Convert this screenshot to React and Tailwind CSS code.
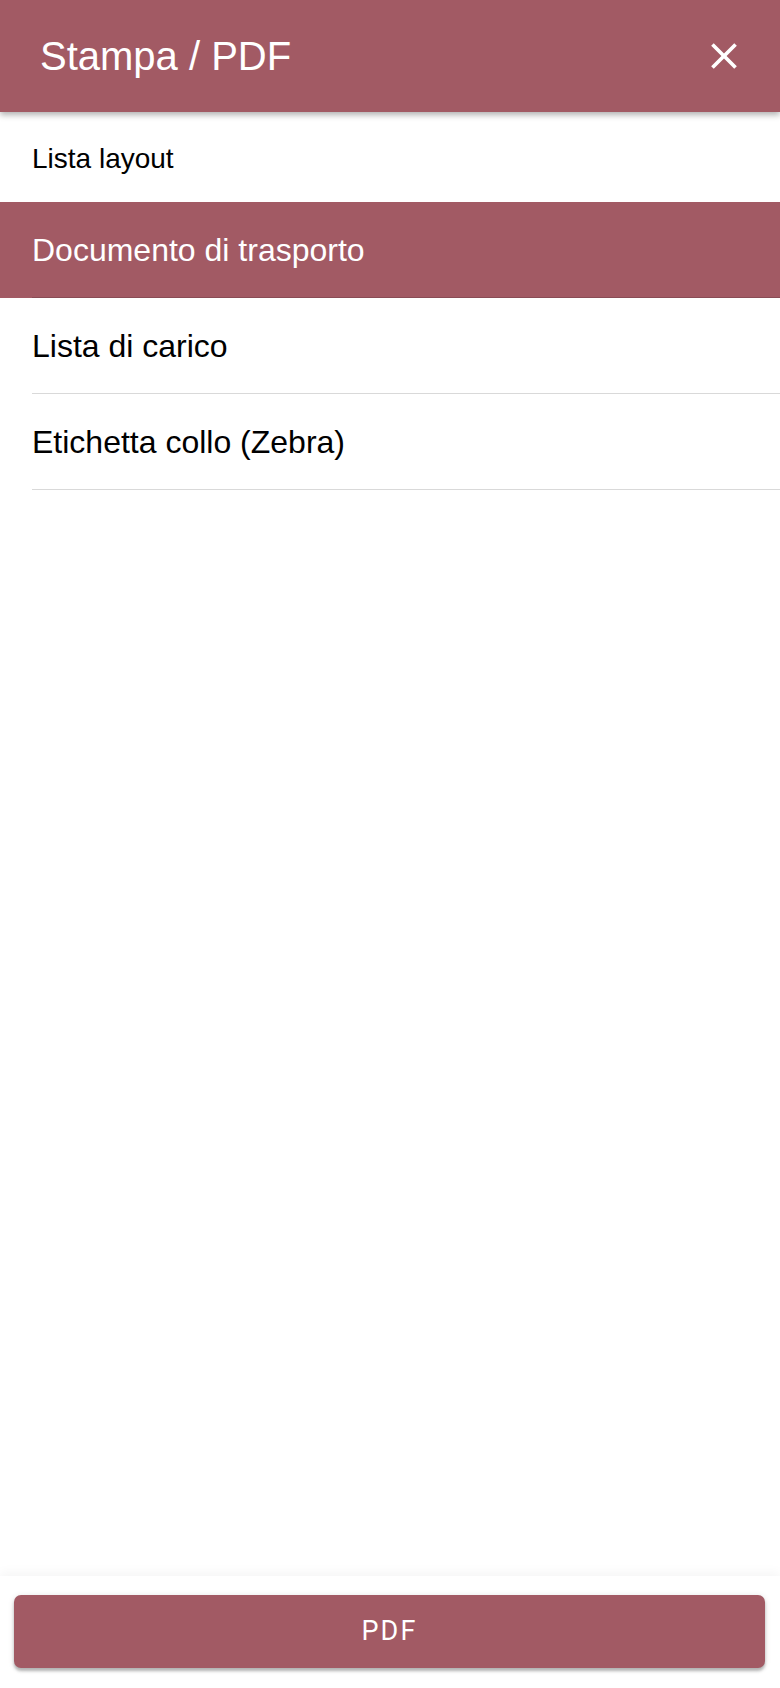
const layouts = [
  { id: 'ddt', label: 'Documento di trasporto' },
  { id: 'carico', label: 'Lista di carico' },
  { id: 'zebra', label: 'Etichetta collo (Zebra)' },
];

function CloseIcon() {
  return (
    <svg className="w-[44px] h-[44px]" viewBox="0 0 24 24" fill="currentColor">
      <path d="M19 6.41L17.59 5 12 10.59 6.41 5 5 6.41 10.59 12 5 17.59 6.41 19 12 13.41 17.59 19 19 17.59 13.41 12z" />
    </svg>
  );
}

export default function App() {
  const selected = 'ddt';

  return (
    <div className="h-[1688px] flex flex-col bg-white font-['Liberation_Sans',Arial,sans-serif]">
      {/* header */}
      <div className="relative z-10 h-[112px] shrink-0 flex items-center justify-between bg-[#a25a64] pl-[40px] pr-[34px] text-white shadow-[0_3px_6px_rgba(0,0,0,0.3)]">
        <h1 className="text-[40px] leading-none">Stampa / PDF</h1>
        <button className="text-white">
          <CloseIcon />
        </button>
      </div>

      {/* list */}
      <div className="flex-1 overflow-hidden">
        <div className="h-[90px] flex items-center pl-[32px] pt-[3px] text-[28px] text-black">
          Lista layout
        </div>
        {layouts.map((item) => {
          const active = item.id === selected;
          return (
            <div
              key={item.id}
              className={
                active
                  ? 'h-[96px] pl-[32px] bg-[#a25a64] text-white'
                  : 'h-[96px] pl-[32px] bg-white text-black'
              }
            >
              <div
                className={
                  active
                    ? 'h-full flex items-center border-b border-black/15 text-[32px]'
                    : 'h-full flex items-center border-b border-[#d9d9d9] text-[32px]'
                }
              >
                {item.label}
              </div>
            </div>
          );
        })}
      </div>

      {/* footer */}
      <div className="h-[112px] shrink-0 bg-white shadow-[0_-4px_10px_rgba(0,0,0,0.04)] pt-[19px] pl-[14px] pr-[15px]">
        <button className="w-full h-[73px] rounded-[7px] bg-[#a25a64] text-white text-[27px] tracking-[0.08em] font-['Roboto',sans-serif] shadow-[0_3px_3px_rgba(0,0,0,0.25),0_1px_6px_rgba(0,0,0,0.12)]">
          PDF
        </button>
      </div>
    </div>
  );
}
